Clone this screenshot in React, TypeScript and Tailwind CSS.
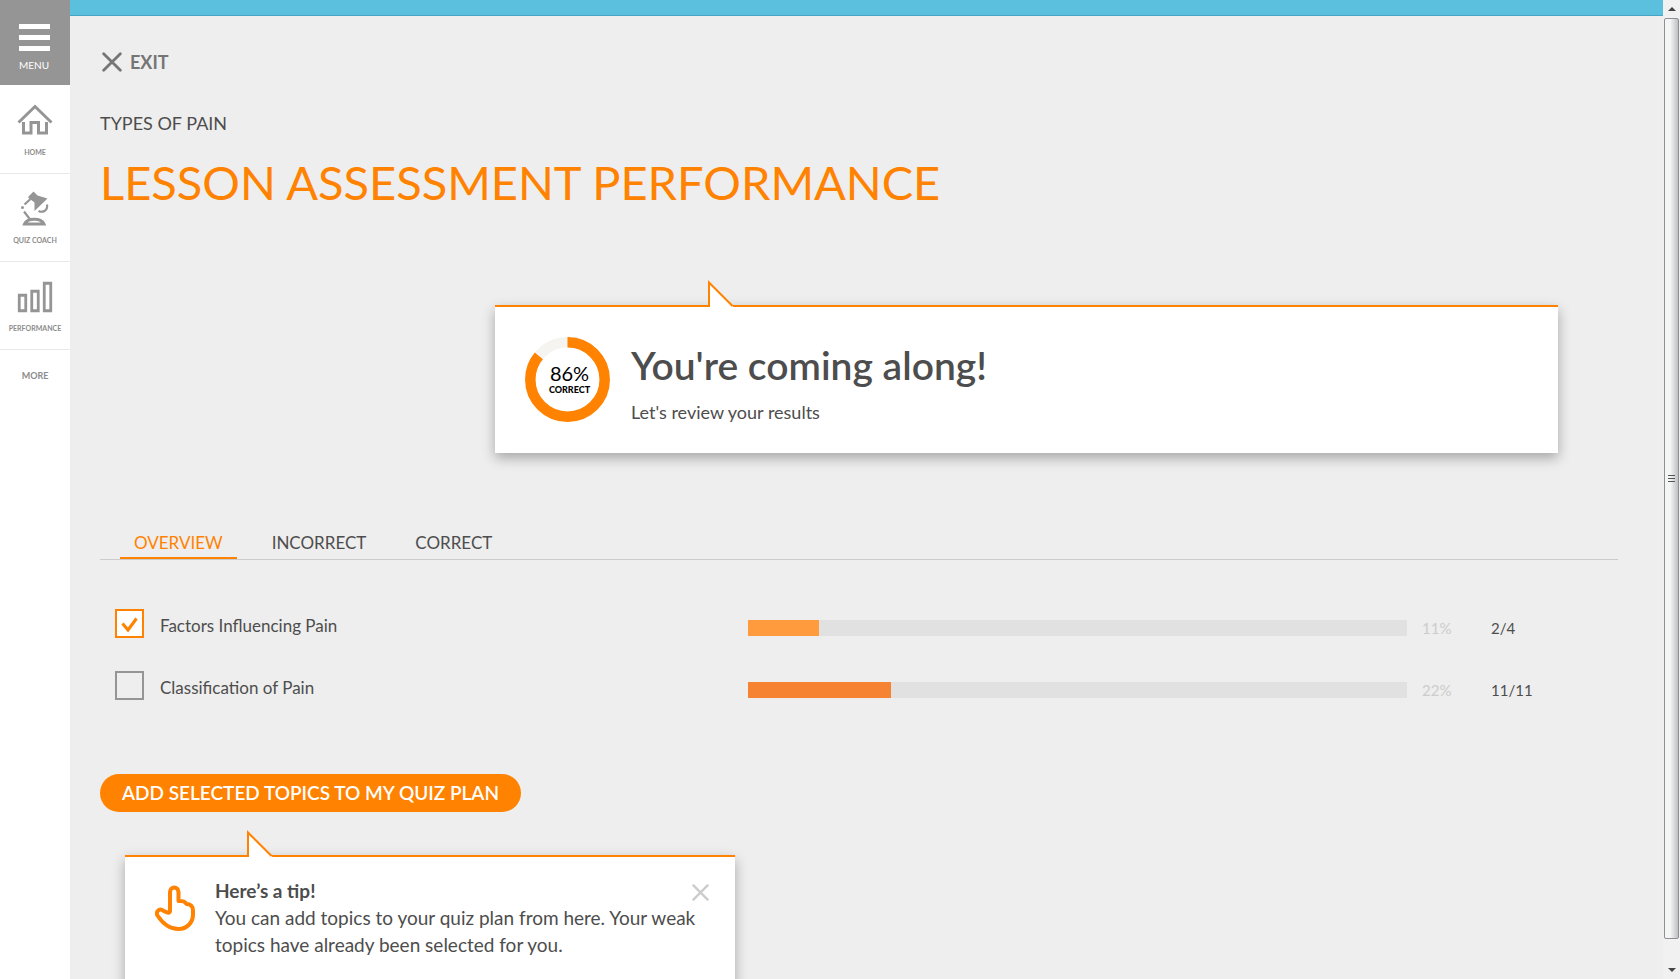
import { useState } from "react";
import type { ReactNode } from "react";

const navItems: { label: string; icon: ReactNode }[] = [
  {
    label: "HOME",
    icon: (
      <svg width="36" height="32" viewBox="0 0 36 32" fill="none" stroke="#959595" aria-hidden="true">
        <path d="M1.500 18.500 18 2.500l16.500 16" strokeWidth="3" />
        <path d="M6.500 18v11h7.500V18.500h7.500V29h8V18" strokeWidth="3" />
      </svg>
    ),
  },
  {
    label: "QUIZ COACH",
    icon: (
      <svg width="30" height="36" viewBox="0 0 30 36" fill="none" stroke="#959595" aria-hidden="true">
        <path d="M9.500 4.500 13.500 0.500 17.500 4.500 27.500 7.500 14.500 20V11.500L8 6.500z" fill="#959595" stroke="none" />
        <path d="M10.500 8 4.500 13.500M4 20.500 10.500 29" strokeWidth="2.200" />
        <circle cx="2.500" cy="16.500" r="1.500" fill="#959595" stroke="none" />
        <path d="M27 13.500c1 6-4 8.500-8.500 6.500" strokeWidth="2.200" />
        <path d="M4.500 33c2.500-6.500 17-6.500 19.500 0z" strokeWidth="3" />
      </svg>
    ),
  },
  {
    label: "PERFORMANCE",
    icon: (
      <svg width="36" height="32" viewBox="0 0 36 32" fill="none" stroke="#959595" strokeWidth="2.800" aria-hidden="true">
        <path d="M2.250 14.250h6.500v15.500h-6.500zM14.750 10.250h6.500v19.500h-6.500zM27.250 2.250h6.500v27.500h-6.500z" />
      </svg>
    ),
  },
];

const tabs = ["OVERVIEW", "INCORRECT", "CORRECT"];

const topics = [
  { id: "factors", name: "Factors Influencing Pain", share: 10.8, score: "2/4", bar: "bg-[#ff9b3d]" },
  { id: "classification", name: "Classification of Pain", share: 21.7, score: "11/11", bar: "bg-[#f58331]" },
];

function Cross({ size, color, width }: { size: number; color: string; width: number }) {
  return (
    <svg width={size} height={size} viewBox="0 0 18 18" stroke={color} strokeWidth={width} strokeLinecap="round" aria-hidden="true">
      <path d="M1.500 1.500l15 15M16.500 1.500l-15 15" />
    </svg>
  );
}

function Pointer({ className }: { className: string }) {
  return (
    <svg className={`absolute bottom-full ${className}`} width="26" height="27" viewBox="0 0 26 27" aria-hidden="true">
      <path d="M1 27V2.500L25.500 27z" fill="#fff" />
      <path d="M1 27V2.500L24.500 26" fill="none" stroke="#ff8200" strokeWidth="2" />
    </svg>
  );
}

function Sidebar() {
  return (
    <nav className="flex w-[70px] shrink-0 flex-col bg-white text-[#8c8c8c]">
      <button className="flex h-[85px] flex-col items-center bg-[#959595] pt-6 pr-[2px] text-white">
        <span className="flex flex-col gap-[6px]">
          <span className="h-[5px] w-[31px] bg-white" />
          <span className="h-[5px] w-[31px] bg-white" />
          <span className="h-[5px] w-[31px] bg-white" />
        </span>
        <span className="mt-[6px] text-[10px] leading-4">MENU</span>
      </button>
      {navItems.map((item) => (
        <a key={item.label} href="#" className="flex h-[88px] flex-col items-center justify-between border-b border-[#e8e8e8] pt-[17px] pb-[15px] first-of-type:h-[89px]">
          <span className="flex h-9 items-center">{item.icon}</span>
          <span className="text-[7px] leading-3 font-bold">{item.label}</span>
        </a>
      ))}
      <a href="#" className="mt-[18px] text-center text-[9px] leading-4 font-bold">
        MORE
      </a>
    </nav>
  );
}

function ScoreRing() {
  return (
    <div className="relative flex size-[85px] flex-col items-center justify-center pb-px pl-1 text-black">
      <svg className="absolute inset-0" width="85" height="85" viewBox="0 0 85 85" fill="none" strokeWidth="10.500" aria-hidden="true">
        <circle cx="42.500" cy="42.500" r="37.200" stroke="#f5f4f0" />
        <circle
          cx="42.500"
          cy="42.500"
          r="37.200"
          stroke="#ff8200"
          pathLength="100"
          strokeDasharray="86 14"
          transform="rotate(-90 42.500 42.500)"
        />
      </svg>
      <span className="relative mb-px text-xl leading-5">86%</span>
      <span className="relative text-[9px] leading-3 font-black">CORRECT</span>
    </div>
  );
}

function Scrollbar() {
  return (
    <div className="flex w-[17px] shrink-0 flex-col items-center bg-[#f1f1f1]" aria-hidden="true">
      <svg className="my-[5px]" width="8" height="8" viewBox="0 0 8 8">
        <path d="M0 6 4 2l4 4z" fill="#444" />
      </svg>
      <div className="flex w-[15px] flex-1 flex-col items-center justify-center gap-[2px] rounded-xs border border-[#8e8f92] bg-linear-to-r from-[#f5f5f5] from-40% to-[#bfc0c4]">
        <span className="h-px w-[7px] bg-[#555]" />
        <span className="h-px w-[7px] bg-[#555]" />
        <span className="h-px w-[7px] bg-[#555]" />
      </div>
      <svg className="mt-7 mb-1" width="8" height="8" viewBox="0 0 8 8">
        <path d="M0 1 4 5l4-4z" fill="#444" />
      </svg>
    </div>
  );
}

export default function App() {
  const [activeTab, setActiveTab] = useState("OVERVIEW");
  const [selected, setSelected] = useState<string[]>(["factors"]);
  const [tipOpen, setTipOpen] = useState(true);

  const toggle = (id: string) =>
    setSelected((current) => (current.includes(id) ? current.filter((item) => item !== id) : [...current, id]));

  return (
    <div className="flex h-screen overflow-hidden bg-[#eeeeee] font-['Lato',sans-serif] text-[#4d4d4d]">
      <Sidebar />
      <div className="flex min-w-0 flex-1 flex-col overflow-hidden">
        <div className="h-4 shrink-0 border-b border-[#46a5c4] bg-[#5bc0de]" />
        <main className="pt-8 pr-[45px] pl-[30px]">
          <button className="flex items-center gap-2 pl-[2px] text-lg leading-7 font-bold text-[#757575]">
            <Cross size={20} color="#757575" width={2.5} />
            EXIT
          </button>
          <p className="mt-[35px] text-lg leading-6">TYPES OF PAIN</p>
          <h1 className="mt-[19px] text-[47px] leading-[56px] text-[#ff8200]">LESSON ASSESSMENT PERFORMANCE</h1>

          <section className="relative mt-[95px] mr-[60px] ml-[395px] flex h-[148px] gap-[21px] border-t-2 border-[#ff8200] bg-white pt-[30px] pl-[30px] shadow-[0_5px_12px_rgba(0,0,0,0.3)]">
            <Pointer className="left-[213px]" />
            <ScoreRing />
            <div>
              <h2 className="text-[39px] leading-[56px] font-semibold">You're coming along!</h2>
              <p className="mt-[7px] text-lg leading-6">Let's review your results</p>
            </div>
          </section>

          <div role="tablist" className="mt-[76px] flex gap-[21px] border-b border-[#cccccc] pl-5">
            {tabs.map((tab) => (
              <button
                key={tab}
                role="tab"
                aria-selected={tab === activeTab}
                onClick={() => setActiveTab(tab)}
                className={`border-b-2 px-[14px] text-[17px] leading-7 ${
                  tab === activeTab ? "border-[#ff8200] text-[#ff8200]" : "border-transparent"
                }`}
              >
                {tab}
              </button>
            ))}
          </div>

          <ul className="mt-[49px] flex flex-col gap-[33px] pl-[15px]">
            {topics.map((topic) => (
              <li key={topic.id} className="flex h-[29px] items-center">
                <label className="flex w-[633px] shrink-0 items-center gap-4 text-[17px]">
                  <span className="relative flex">
                    <input
                      type="checkbox"
                      checked={selected.includes(topic.id)}
                      onChange={() => toggle(topic.id)}
                      className="peer size-[29px] appearance-none border-2 border-[#959595] checked:border-[#ff8200] checked:bg-white"
                    />
                    <svg
                      className="pointer-events-none absolute inset-0 hidden peer-checked:block"
                      width="29"
                      height="29"
                      viewBox="0 0 29 29"
                      fill="none"
                      stroke="#ff8200"
                      strokeWidth="3"
                      aria-hidden="true"
                    >
                      <path d="M7.500 14.500 13 21 21.500 9.500" />
                    </svg>
                  </span>
                  <span className="pt-1">{topic.name}</span>
                </label>
                <div className="mt-[9px] h-4 flex-1 bg-[#e1e1e1]">
                  <div className={`h-full ${topic.bar}`} style={{ width: `${topic.share}%` }} />
                </div>
                <span className="w-[84px] pt-[10px] pl-[15px] text-[15px] text-[#cccccc]">{Math.round(topic.share)}%</span>
                <span className="w-[127px] pt-[10px] text-[15px]">{topic.score}</span>
              </li>
            ))}
          </ul>

          <button className="mt-[74px] h-[38px] rounded-full bg-[#ff8200] px-[22px] text-[19px] leading-7 font-semibold text-white">
            ADD SELECTED TOPICS TO MY QUIZ PLAN
          </button>

          {tipOpen && (
            <aside className="relative mt-[43px] ml-[25px] flex w-[610px] border-t-2 border-[#ff8200] bg-white pt-5 pr-7 pb-10 pl-[30px] shadow-[0_5px_12px_rgba(0,0,0,0.3)]">
              <Pointer className="left-[122px]" />
              <svg className="mt-2 shrink-0" width="41" height="46" viewBox="0 0 41 46" fill="none" stroke="#ff8200" strokeWidth="4" strokeLinejoin="round" aria-hidden="true">
                <path d="M15 26V7c0-6 8.500-6 8.500 0v9c5-.5 6.500.5 8 3 4 0 6.500 2.500 6.500 6.500v4c0 8-6 14.500-14.500 14.500-9 0-15.500-5-21-13.500-2-3.500 1.500-7 4.500-5.500C11 27.500 15 29 15 26z" />
              </svg>
              <div className="ml-[19px] flex-1 text-[19px] leading-[27px]">
                <h3 className="font-bold">Here’s a tip!</h3>
                <p>
                  You can add topics to your quiz plan from here. Your weak topics have already been selected for you.
                </p>
              </div>
              <button aria-label="Close tip" className="absolute top-[27px] right-[26px]" onClick={() => setTipOpen(false)}>
                <Cross size={17} color="#cccccc" width={2.5} />
              </button>
            </aside>
          )}
        </main>
      </div>
      <Scrollbar />
    </div>
  );
}
